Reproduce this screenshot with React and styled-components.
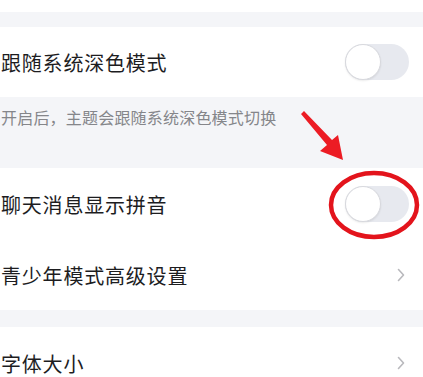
import React from 'react'
import styled, { createGlobalStyle } from 'styled-components'

const GlobalStyle = createGlobalStyle`
  html, body {
    margin: 0;
    padding: 0;
    background: #ffffff;
  }
  body {
    font-family: "Noto Sans CJK SC", "Noto Sans", sans-serif;
    overflow: hidden;
  }
`

const App = () => {
  return (
    <Page>
      <GlobalStyle />
      <Spacer h={12} bg="#ffffff" />
      <Spacer h={15} bg="#f4f5f8" />

      <Row h={70}>
        <Label>跟随系统深色模式</Label>
        <Toggle />
      </Row>

      <Desc>开启后，主题会跟随系统深色模式切换</Desc>

      <Row h={72}>
        <Label>聊天消息显示拼音</Label>
        <Toggle />
      </Row>

      <Row h={70}>
        <Label>青少年模式高级设置</Label>
        <Chevron />
      </Row>

      <Spacer h={17} bg="#f4f5f8" />

      <Row h={72}>
        <Label>字体大小</Label>
        <Chevron />
      </Row>

      <Annotation width="423" height="377" viewBox="0 0 423 377">
        <polygon points="301,114 304,111 332,140 338,135 343,160 320,151 327,145" fill="#ec1c24" />
        <ellipse cx="374" cy="205" rx="43" ry="32" fill="none" stroke="#e3141c" strokeWidth="4.5" />
      </Annotation>
    </Page>
  )
}

const Toggle = () => (
  <Track>
    <Knob />
  </Track>
)

const Chevron = () => (
  <ChevronBox width="12" height="16" viewBox="0 0 12 16">
    <path d="M3.5 2.5 L8.5 8 L3.5 13.5" fill="none" stroke="#b9b9bd" strokeWidth="1.6" strokeLinecap="round" strokeLinejoin="round" />
  </ChevronBox>
)

export default App

const Page = styled.div`
  position: relative;
  width: 423px;
  height: 377px;
  overflow: hidden;
  display: flex;
  flex-direction: column;
`

const Spacer = styled.div`
  flex: none;
  height: ${p => p.h}px;
  background: ${p => p.bg};
`

const Row = styled.div`
  flex: none;
  height: ${p => p.h}px;
  background: #ffffff;
  display: flex;
  align-items: center;
  justify-content: space-between;
  padding: 0 14px 0 1px;
`

const Label = styled.span`
  font-size: 20px;
  color: #1d1d1f;
  letter-spacing: 0.8px;
`

const Desc = styled.div`
  flex: none;
  height: 71px;
  box-sizing: border-box;
  background: #f4f5f8;
  padding: 8px 0 0 1px;
  font-size: 16px;
  color: #85868a;
  letter-spacing: 0.2px;
`

const Track = styled.div`
  width: 64px;
  height: 36px;
  border-radius: 18px;
  background: #e7e9ef;
  position: relative;
`

const Knob = styled.div`
  position: absolute;
  left: 0;
  top: 0;
  width: 34px;
  height: 34px;
  border-radius: 50%;
  background: #ffffff;
  border: 1px solid #d8d9de;
  box-shadow: 0 1px 2px rgba(0, 0, 0, 0.08);
`

const ChevronBox = styled.svg`
  margin-right: 2px;
`

const Annotation = styled.svg`
  position: absolute;
  left: 0;
  top: 0;
  pointer-events: none;
`
